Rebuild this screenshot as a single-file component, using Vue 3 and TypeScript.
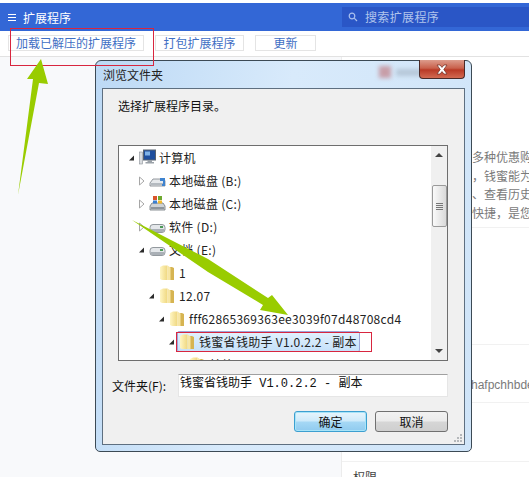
<script setup lang="ts">
interface TreeRow {
  label: string
  level: number
  icon: 'monitor' | 'drive' | 'usb' | 'windows' | 'folder'
  arrow?: 'open' | 'closed'
  selected?: boolean
}

const rows: TreeRow[] = [
  { label: '计算机', level: 0, icon: 'monitor', arrow: 'open' },
  { label: '本地磁盘 (B:)', level: 1, icon: 'usb', arrow: 'closed' },
  { label: '本地磁盘 (C:)', level: 1, icon: 'windows', arrow: 'closed' },
  { label: '软件 (D:)', level: 1, icon: 'drive', arrow: 'closed' },
  { label: '文档 (E:)', level: 1, icon: 'drive', arrow: 'open' },
  { label: '1', level: 2, icon: 'folder' },
  { label: '12.07', level: 2, icon: 'folder', arrow: 'open' },
  { label: 'fff62865369363ee3039f07d48708cd4', level: 3, icon: 'folder', arrow: 'open' },
  { label: '钱蜜省钱助手 V1.0.2.2 - 副本', level: 4, icon: 'folder', arrow: 'open', selected: true },
  { label: '其他', level: 5, icon: 'folder' },
]

const blurbs = ['多种优惠购', '，钱蜜能为', '、查看历史', '快捷，是您']
</script>

<template>
  <div class="page">
    <header class="topbar">
      <div class="topbar__title">
        <span class="burger"><i></i><i></i><i></i></span>
        <span>扩展程序</span>
      </div>
      <div class="search">
        <svg width="10" height="10" viewBox="0 0 10 10" fill="none" stroke="#a9c0ee" stroke-width="1.2">
          <circle cx="4" cy="4" r="2.800" />
          <path d="M6.200 6.200 9 9" />
        </svg>
        <span>搜索扩展程序</span>
      </div>
    </header>

    <div class="toolbar">
      <button type="button" class="tool tool--load">加载已解压的扩展程序</button>
      <button type="button" class="tool tool--pack">打包扩展程序</button>
      <button type="button" class="tool tool--update">更新</button>
    </div>

    <div class="content">
      <aside class="side"></aside>
      <main class="main">
        <div class="main__blurb">
          <p v-for="line in blurbs" :key="line">{{ line }}</p>
        </div>
        <div class="main__gap"></div>
        <div class="main__id">hafpchhbde</div>
        <div class="main__gap main__gap--low"></div>
        <div class="main__perm">权限</div>
      </main>
    </div>

    <section class="dialog">
      <div class="dialog__title">
        <span>浏览文件夹</span>
        <div class="ghost"><i></i><b></b></div>
        <button type="button" class="close">
          <svg width="14" height="11" viewBox="0 0 14 11">
            <path d="M2 1h3l2 2.400L9 1h3L8.800 5.500 12 10H9L7 7.600 5 10H2l3.200-4.500z" fill="#fff" stroke="#6b2a20" stroke-width=".7" />
          </svg>
        </button>
      </div>
      <div class="dialog__body">
        <p class="dialog__prompt">选择扩展程序目录。</p>
        <div class="tree">
          <ul class="tree__list">
            <li
              v-for="row in rows"
              :key="row.label"
              class="tree__row"
              :style="{ paddingLeft: 8 + row.level * 10 + 'px' }"
            >
              <span class="arrow">
                <svg v-if="row.arrow === 'open'" width="10" height="10" viewBox="0 0 10 10">
                  <path d="M2 7.500 7 2.500v5z" fill="#2b2b2b" />
                </svg>
                <svg v-else-if="row.arrow === 'closed'" width="10" height="10" viewBox="0 0 10 10">
                  <path d="M2.500 1 7 5 2.500 9z" fill="#fff" stroke="#a6a6a6" />
                </svg>
              </span>
              <span class="tree__cell" :class="{ 'tree__cell--on': row.selected }">
                <svg v-if="row.icon === 'monitor'" width="17" height="17" viewBox="0 0 17 17">
                  <rect x=".5" y="3" width="3" height="12" fill="#d9dcdf" stroke="#8b9096" stroke-width=".6" />
                  <rect x="4.500" y="1" width="12" height="10" fill="#1f4f9e" stroke="#5a6470" />
                  <rect x="6" y="2.500" width="5" height="4" fill="#7fb2e8" />
                  <path d="M8.500 11h4.500v2h2v1.500H6.500V13h2z" fill="#9aa1a8" />
                </svg>
                <svg v-else-if="row.icon === 'usb'" width="17" height="17" viewBox="0 0 17 17">
                  <path d="M4 7h11l1 2v5H1v-3z" fill="#e6e9ec" stroke="#7b8288" stroke-width=".8" />
                  <rect x="2" y="11" width="13" height="2" fill="#b4bac0" />
                  <path d="M11 6h5v8h-3v-2h1V9h-3z" fill="#3f83cf" />
                </svg>
                <svg v-else-if="row.icon === 'drive'" width="17" height="17" viewBox="0 0 17 17">
                  <rect x="1" y="6.500" width="15" height="8" rx="3" fill="#e4e7ea" stroke="#7b8288" stroke-width=".8" />
                  <path d="M1.500 11h14v1a2 2 0 0 1-2 2h-10a2 2 0 0 1-2-2z" fill="#aab0b6" />
                  <rect x="11" y="8" width="3" height="2" fill="#4c9a58" />
                </svg>
                <svg v-else-if="row.icon === 'windows'" width="17" height="17" viewBox="0 0 17 17">
                  <path d="M3 8h11l2 3v4H1v-4z" fill="#cfd3d6" stroke="#6f767c" stroke-width=".8" />
                  <rect x="2" y="12" width="13" height="2" fill="#8d959c" />
                  <rect x="4" y="1" width="4" height="4" fill="#d9552b" />
                  <rect x="9" y="1" width="4" height="4" fill="#6ea92f" />
                  <rect x="4" y="5.500" width="4" height="3" fill="#3a7fd0" />
                  <rect x="9" y="5.500" width="4" height="3" fill="#f0b92d" />
                </svg>
                <svg v-else width="17" height="17" viewBox="0 0 17 17">
                  <defs>
                    <linearGradient id="fold" x1="0" y1="0" x2="1" y2="0">
                      <stop offset="0" stop-color="#fff6c4" />
                      <stop offset="1" stop-color="#efd77f" />
                    </linearGradient>
                  </defs>
                  <path d="M1 3 4 1.500h4.500v14.500H3l-2-1z" fill="url(#fold)" />
                  <path d="M9 3h4l2 1v12H9z" fill="#d6b452" />
                  <path d="M8.500 1.500 11.500 3.500V16h-3z" fill="#f7e6a4" />
                </svg>
                <span class="tree__label">{{ row.label }}</span>
              </span>
            </li>
          </ul>
          <div class="scroll">
            <span class="scroll__btn scroll__btn--up"></span>
            <span class="scroll__thumb"><i></i><i></i><i></i><i></i></span>
            <span class="scroll__btn scroll__btn--down"></span>
          </div>
        </div>
        <div class="field">
          <label class="field__label">文件夹(F):</label>
          <div class="field__input">钱蜜省钱助手 V1.0.2.2 - 副本</div>
        </div>
        <div class="actions">
          <button type="button" class="btn btn--primary">确定</button>
          <button type="button" class="btn">取消</button>
        </div>
        <svg class="grip" width="10" height="10" viewBox="0 0 10 10" fill="#b5b8bb">
          <rect x="7" y="1" width="2" height="2" />
          <rect x="4" y="4" width="2" height="2" />
          <rect x="7" y="4" width="2" height="2" />
          <rect x="1" y="7" width="2" height="2" />
          <rect x="4" y="7" width="2" height="2" />
          <rect x="7" y="7" width="2" height="2" />
        </svg>
      </div>
    </section>

    <!-- annotations drawn over the screenshot -->
    <div class="mark mark--load"></div>
    <div class="mark mark--folder"></div>
    <svg class="arrows" width="529" height="477" viewBox="0 0 529 477">
      <path d="M41 59 48 84 39 83 18 195 33 79 27 79z" fill="#99cc00" />
      <path d="M132 220 208 259 268 298 272 295 288 315 260 310 263 305 208 272z" fill="#99cc00" />
    </svg>
  </div>
</template>

<style scoped>
.page {
  position: relative;
  width: 529px;
  height: 477px;
  overflow: hidden;
  padding-top: 3px;
  box-sizing: border-box;
  display: flex;
  flex-direction: column;
  background: #fff;
  font-family: "Noto Sans CJK SC", "Liberation Sans", sans-serif;
}

.topbar {
  flex: none;
  height: 28px;
  display: flex;
  align-items: center;
  justify-content: space-between;
  background: #3367d6;
  color: #fff;
}

.topbar__title {
  display: flex;
  align-items: center;
  gap: 7px;
  padding-left: 8px;
  font-size: 12px;
}

.burger {
  display: flex;
  flex-direction: column;
  gap: 2px;
  width: 8px;
}

.burger i {
  height: 1px;
  background: #fff;
}

.search {
  width: 187px;
  height: 20px;
  margin-bottom: 1px;
  display: flex;
  align-items: center;
  gap: 7px;
  padding-left: 6px;
  box-sizing: border-box;
  background: #2a56c6;
  color: #b0c4ec;
  font-size: 12px;
  letter-spacing: .35px;
}

.toolbar {
  flex: none;
  height: 26px;
  display: flex;
  align-items: center;
  gap: 11px;
  padding: 0 0 1px 8px;
  box-sizing: border-box;
  border-bottom: 1px solid #e2e2e2;
}

.tool {
  height: 16px;
  padding: 0;
  border: 1px solid #e4e4e4;
  background: #fff;
  color: #3f6fc4;
  font: 12px/14px "Noto Sans CJK SC", sans-serif;
}

.tool--load {
  width: 136px;
}

.tool--pack {
  width: 89px;
}

.tool--update {
  width: 61px;
}

.content {
  flex: 1;
  display: flex;
  min-height: 0;
}

.side {
  flex: none;
  width: 341px;
  background: #f8f9fb;
}

.main {
  flex: 1;
  min-width: 0;
  overflow: hidden;
  border-left: 1px solid #ececec;
  padding-top: 91px;
  color: #7a7a7a;
  font-size: 12px;
  white-space: nowrap;
}

.main__blurb {
  height: 80px;
  box-sizing: border-box;
  padding-left: 130px;
  border-bottom: 1px solid #f1f1f1;
}

.main__blurb p {
  margin: 0;
  line-height: 18.500px;
}

.main__gap {
  height: 117px;
  box-sizing: border-box;
  border-bottom: 1px solid #f1f1f1;
}

.main__gap--low {
  height: 59px;
}

.main__id {
  height: 58px;
  box-sizing: border-box;
  padding: 32px 0 0 129px;
  border-bottom: 1px solid #f1f1f1;
  font-family: "Liberation Sans", sans-serif;
  line-height: 16px;
}

.main__perm {
  padding: 7px 0 0 11px;
  line-height: 16px;
  color: #444;
}

/* the native dialog floats over the page like a desktop window */
.dialog {
  position: absolute;
  left: 95px;
  top: 60px;
  width: 377px;
  height: 392px;
  box-sizing: border-box;
  padding: 0 6px 6px;
  display: flex;
  flex-direction: column;
  border: 1px solid #3c4a55;
  border-radius: 6px 6px 5px 5px;
  background: linear-gradient(100deg, #bcd9f5 0%, #d8eafb 45%, #cfe4f8 100%);
}

.dialog__title {
  position: relative;
  flex: none;
  height: 27px;
  display: flex;
  align-items: center;
  padding-left: 1px;
  color: #222;
  font-size: 12px;
}

.ghost {
  position: absolute;
  left: 277px;
  top: 5px;
  display: flex;
  align-items: center;
  gap: 5px;
  filter: blur(2px);
}

.ghost i {
  width: 12px;
  height: 12px;
  background: #c79ea8;
}

.ghost b {
  width: 26px;
  height: 7px;
  background: #b6c7d8;
}

.close {
  position: absolute;
  right: 0;
  top: -1px;
  width: 46px;
  height: 19px;
  padding: 0;
  display: flex;
  align-items: center;
  justify-content: center;
  border: 1px solid #4a2a28;
  border-top: 0;
  border-radius: 0 0 4px 4px;
  background: linear-gradient(180deg, #dd9c8c 0%, #c9614c 45%, #b93a26 55%, #d26a52 100%);
}

.dialog__body {
  position: relative;
  flex: 1;
  min-height: 0;
  display: flex;
  flex-direction: column;
  padding: 0 16px 0 15px;
  border: 1px solid #5e6f80;
  background: #f0f0f0;
  color: #111;
}

.dialog__prompt {
  margin: 0;
  height: 56px;
  padding-top: 8px;
  box-sizing: border-box;
  font-size: 12px;
  line-height: 17px;
}

.tree {
  flex: none;
  height: 216px;
  display: flex;
  box-sizing: border-box;
  border: 1px solid #6e6e6e;
  background: #fff;
  overflow: hidden;
}

.tree__list {
  flex: 1;
  min-width: 0;
  margin: 0;
  padding: 0;
  list-style: none;
}

.tree__row {
  height: 23px;
  display: flex;
  align-items: center;
  font-size: 12px;
  white-space: nowrap;
  color: #222;
}

.tree__cell {
  display: flex;
  align-items: center;
  gap: 3px;
  height: 21px;
  padding: 0 4px 0 1px;
  border: 1px solid transparent;
  border-radius: 2px;
}

.tree__cell--on {
  width: 183px;
  box-sizing: border-box;
  border-color: #9ea6d8;
  background: linear-gradient(180deg, #e2f1fd, #c6e1fa);
}

.tree__cell svg {
  flex: none;
}

.tree__label {
  line-height: 15px;
  letter-spacing: .3px;
}

.arrow {
  flex: none;
  width: 10px;
  height: 10px;
  display: block;
}

.arrow svg {
  display: block;
}

.scroll {
  flex: none;
  width: 16px;
  display: flex;
  flex-direction: column;
  align-items: center;
  background: #f0f0f0;
}

.scroll__btn {
  flex: none;
  height: 18px;
  width: 100%;
  position: relative;
}

.scroll__btn::after {
  content: "";
  position: absolute;
  left: 4px;
  top: 7px;
  border-left: 4px solid transparent;
  border-right: 4px solid transparent;
}

.scroll__btn--up::after {
  border-bottom: 4px solid #444;
}

.scroll__btn--down {
  margin-top: auto;
}

.scroll__btn--down::after {
  border-top: 4px solid #444;
}

.scroll__thumb {
  flex: none;
  width: 15px;
  height: 42px;
  margin-top: 21px;
  display: flex;
  flex-direction: column;
  align-items: center;
  justify-content: center;
  gap: 1px;
  box-sizing: border-box;
  border: 1px solid #9a9a9a;
  border-radius: 2px;
  background: linear-gradient(90deg, #fafafa, #d9d9d9);
}

.scroll__thumb i {
  width: 7px;
  height: 1px;
  background: #777;
}

.field {
  flex: none;
  display: flex;
  align-items: center;
  margin-top: 13px;
  margin-left: -6px;
}

.field__label {
  width: 66px;
  flex: none;
  font-size: 12px;
}

.field__input {
  flex: 1;
  height: 23px;
  padding: 1px 0 0 1px;
  background: #fff;
  border: 1px solid #e6e6e6;
  border-top-color: #a0a0a0;
  box-sizing: border-box;
  font: 12px/17px "Liberation Mono", "Noto Sans CJK SC", monospace;
  color: #111;
  white-space: nowrap;
}

.actions {
  flex: none;
  display: flex;
  justify-content: flex-end;
  gap: 8px;
  margin-top: 14px;
}

.btn {
  width: 73px;
  height: 21px;
  padding: 0;
  border: 1px solid #707070;
  border-radius: 3px;
  background: linear-gradient(180deg, #f2f2f2 0%, #ebebeb 48%, #d6d6d6 52%, #cfcfcf 100%);
  color: #111;
  font: 12px/17px "Noto Sans CJK SC", sans-serif;
}

.btn--primary {
  border-color: #3c9fd0;
  box-shadow: inset 0 0 0 1px #a8e4f8;
  background: linear-gradient(180deg, #e8f5fc 0%, #cdeafa 48%, #a6d8f5 52%, #90cbef 100%);
}

.grip {
  position: absolute;
  right: 1px;
  bottom: 1px;
}

.mark {
  position: absolute;
  box-sizing: border-box;
  border: 1px solid #d8263f;
}

.mark--load {
  left: 10px;
  top: 28px;
  width: 144px;
  height: 38px;
}

.mark--folder {
  left: 176px;
  top: 332px;
  width: 196px;
  height: 20px;
}

.arrows {
  position: absolute;
  left: 0;
  top: 0;
  pointer-events: none;
}
</style>
